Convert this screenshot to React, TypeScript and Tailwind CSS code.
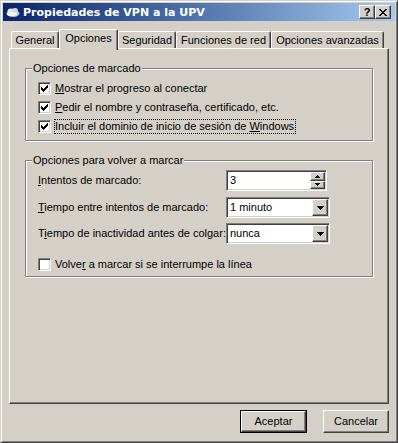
import React from 'react';

// Win2k-style bevels
const raised =
  'border border-t-white border-l-white border-r-[#404040] border-b-[#404040] shadow-[inset_-1px_-1px_0_#808080,inset_1px_1px_0_#d4d0c8]';
const sunken =
  'border border-t-[#808080] border-l-[#808080] border-r-white border-b-white shadow-[inset_1px_1px_0_#404040,inset_-1px_-1px_0_#d4d0c8]';

const checkPixels: [number, number, number][] = [
  [6, 0, 1],
  [5, 1, 2],
  [0, 2, 1],
  [4, 2, 3],
  [0, 3, 2],
  [3, 3, 3],
  [0, 4, 5],
  [1, 5, 3],
  [2, 6, 1],
];

const closePixels: [number, number, number][] = [
  [0, 0, 2], [6, 0, 2],
  [1, 1, 2], [5, 1, 2],
  [2, 2, 4],
  [3, 3, 2],
  [2, 4, 4],
  [1, 5, 2], [5, 5, 2],
  [0, 6, 2], [6, 6, 2],
];

function Pixels({ data, w, h }: { data: [number, number, number][]; w: number; h: number }) {
  return (
    <svg width={w} height={h} viewBox={`0 0 ${w} ${h}`} shapeRendering="crispEdges">
      {data.map(([x, y, len], i) => (
        <rect key={i} x={x} y={y} width={len} height={1} fill="#000" />
      ))}
    </svg>
  );
}

function Checkbox({ checked }: { checked?: boolean }) {
  return (
    <div className={`w-[13px] h-[13px] bg-white flex items-center justify-center shrink-0 ${sunken}`}>
      {checked && <Pixels data={checkPixels} w={7} h={7} />}
    </div>
  );
}

function Triangle({ size }: { size: number }) {
  // downward pointing, width = size*2-1
  const rows: [number, number, number][] = [];
  for (let i = 0; i < size; i++) rows.push([i, i, (size - i) * 2 - 1]);
  return <Pixels data={rows} w={size * 2 - 1} h={size} />;
}

function Combo({ value }: { value: string }) {
  return (
    <div className={`w-[104px] h-[21px] bg-white flex items-stretch p-[1px] ${sunken}`}>
      <div className="flex-1 flex items-center pl-[2px]">{value}</div>
      <div className={`w-[16px] bg-[#d4d0c8] flex items-center justify-center ${raised}`}>
        <Triangle size={4} />
      </div>
    </div>
  );
}

function Spin({ value }: { value: string }) {
  return (
    <div className={`w-[101px] h-[21px] bg-white flex items-stretch p-[1px] ${sunken}`}>
      <div className="flex-1 flex items-center pl-[2px]">{value}</div>
      <div className="w-[15px] flex flex-col">
        <div className={`flex-1 bg-[#d4d0c8] flex items-center justify-center ${raised}`}>
          <div className="rotate-180">
            <Triangle size={3} />
          </div>
        </div>
        <div className={`flex-1 bg-[#d4d0c8] flex items-center justify-center ${raised}`}>
          <Triangle size={3} />
        </div>
      </div>
    </div>
  );
}

const tabs = [
  { label: 'General', w: 'w-[48px]' },
  { label: 'Opciones', w: 'w-[59px]', active: true },
  { label: 'Seguridad', w: 'w-[58px]' },
  { label: 'Funciones de red', w: 'w-[95px]' },
  { label: 'Opciones avanzadas', w: 'w-[113px]' },
];

export default function App() {
  return (
    <div
      className={`w-[398px] h-[443px] bg-[#d4d0c8] flex flex-col p-[2px] text-[11px] leading-[13px] text-black font-['Liberation_Sans',Arial,sans-serif] border border-t-[#d4d0c8] border-l-[#d4d0c8] border-r-[#404040] border-b-[#404040] shadow-[inset_1px_1px_0_#fff,inset_-1px_-1px_0_#808080]`}
    >
      {/* TITLE BAR */}
      <div className="h-[18px] shrink-0 flex items-center bg-linear-to-r from-[#0a246a] to-[#a6caf0]">
        <svg width="16" height="14" viewBox="0 0 16 14" className="ml-[2px]">
          <ellipse cx="8" cy="8.5" rx="6.5" ry="3.5" fill="#c0c0c0" />
          <ellipse cx="6" cy="6.5" rx="3.5" ry="3" fill="#e8e8e8" />
          <ellipse cx="10" cy="6" rx="3" ry="3" fill="#d8d8d8" />
          <ellipse cx="7" cy="9" rx="5" ry="2" fill="#f4f4f4" />
        </svg>
        <span className="ml-[2px] text-white font-bold font-['DejaVu_Sans',Verdana,sans-serif]">
          Propiedades de VPN a la UPV
        </span>
        <div className="ml-auto mr-[4px] flex">
          <div className={`w-[16px] h-[14px] bg-[#d4d0c8] flex items-center justify-center font-bold leading-none ${raised}`}>
            ?
          </div>
          <div className={`w-[16px] h-[14px] bg-[#d4d0c8] flex items-center justify-center ${raised}`}>
            <Pixels data={closePixels} w={8} h={7} />
          </div>
        </div>
      </div>

      {/* TABS */}
      <div className="mt-[8px] h-[19px] shrink-0 flex items-end pl-[8px]">
        {tabs.map((t) =>
          t.active ? (
            <div
              key={t.label}
              className={`${t.w} h-[21px] -mb-[2px] relative z-10 bg-[#d4d0c8] flex items-center justify-center pb-[3px] rounded-t-[2px] border-t border-l border-r border-t-white border-l-white border-r-[#404040] shadow-[inset_-1px_0_0_#808080]`}
            >
              {t.label}
            </div>
          ) : (
            <div
              key={t.label}
              className={`${t.w} h-[17px] flex items-center justify-center rounded-t-[2px] border-t border-l border-r border-t-white border-l-white border-r-[#404040] shadow-[inset_-1px_0_0_#808080]`}
            >
              {t.label}
            </div>
          )
        )}
      </div>

      {/* PANEL */}
      <div className="mx-[6px] h-[356px] shrink-0 flex flex-col pt-[19px] px-[15px] border border-t-white border-l-white border-r-[#404040] border-b-[#404040] shadow-[inset_-1px_-1px_0_#808080]">
        {/* Opciones de marcado */}
        <div className="relative h-[73px] pt-[10px] pl-[12px] border border-[#808080] shadow-[inset_1px_1px_0_#fff,1px_1px_0_#fff]">
          <span className="absolute -top-[7px] left-[6px] px-[1px] bg-[#d4d0c8]">Opciones de marcado</span>
          <div className="h-[19px] flex items-center">
            <Checkbox checked />
            <span className="ml-[4px]">
              <span className="underline">M</span>ostrar el progreso al conectar
            </span>
          </div>
          <div className="h-[19px] flex items-center">
            <Checkbox checked />
            <span className="ml-[4px]">
              <span className="underline">P</span>edir el nombre y contraseña, certificado, etc.
            </span>
          </div>
          <div className="h-[19px] flex items-center">
            <Checkbox checked />
            <span className="ml-[3px] pr-[1px] border border-dotted border-black">
              Incluir el dominio de inicio de sesión de <span className="underline">W</span>indows
            </span>
          </div>
        </div>

        {/* Opciones para volver a marcar */}
        <div className="relative mt-[19px] h-[117px] pt-[9px] pl-[12px] border border-[#808080] shadow-[inset_1px_1px_0_#fff,1px_1px_0_#fff]">
          <span className="absolute -top-[7px] left-[6px] px-[1px] bg-[#d4d0c8]">Opciones para volver a marcar</span>
          <div className="h-[21px] flex items-center">
            <span className="w-[188px] shrink-0 whitespace-nowrap">
              <span className="underline">I</span>ntentos de marcado:
            </span>
            <Spin value="3" />
          </div>
          <div className="mt-[6px] h-[21px] flex items-center">
            <span className="w-[188px] shrink-0 whitespace-nowrap">
              <span className="underline">T</span>iempo entre intentos de marcado:
            </span>
            <Combo value="1 minuto" />
          </div>
          <div className="mt-[5px] h-[21px] flex items-center">
            <span className="w-[188px] shrink-0 whitespace-nowrap">
              T<span className="underline">i</span>empo de inactividad antes de colgar:
            </span>
            <Combo value="nunca" />
          </div>
          <div className="mt-[11px] h-[19px] flex items-center">
            <Checkbox />
            <span className="ml-[4px]">
              Volve<span className="underline">r</span> a marcar si se interrumpe la línea
            </span>
          </div>
        </div>
      </div>

      {/* BUTTONS */}
      <div className="mt-[6px] h-[23px] shrink-0 flex justify-end gap-[16px] pr-[6px]">
        <div className="w-[67px] h-[23px] border border-black">
          <div className={`w-full h-full bg-[#d4d0c8] flex items-center justify-center ${raised}`}>Aceptar</div>
        </div>
        <div className={`w-[66px] h-[23px] bg-[#d4d0c8] flex items-center justify-center ${raised}`}>Cancelar</div>
      </div>
    </div>
  );
}
